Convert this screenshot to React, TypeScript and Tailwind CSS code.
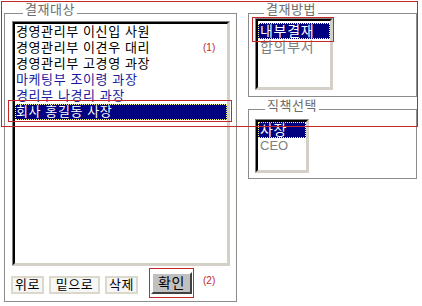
import React from 'react';

type Row = { label: string; tone: 'black' | 'blue' | 'gray'; selected?: boolean };

const targets: Row[] = [
  { label: '경영관리부 이신입 사원', tone: 'black' },
  { label: '경영관리부 이견우 대리', tone: 'black' },
  { label: '경영관리부 고경영 과장', tone: 'black' },
  { label: '마케팅부 조이령 과장', tone: 'blue' },
  { label: '경리부 나경리 과장', tone: 'blue' },
  { label: '회사 홍길동 사장', tone: 'black', selected: true },
];

const toneClass = {
  black: 'text-black',
  blue: 'text-[#1a1a9e]',
  gray: 'text-[#808080]',
};

const ListBox: React.FC<{ className?: string; children: React.ReactNode }> = ({ className, children }) => (
  <div className={`border border-t-[#808080] border-l-[#808080] border-r-[#d4d0c8] border-b-[#d4d0c8] ${className ?? ''}`}>
    <div className="w-full h-full border-2 border-t-black border-l-black border-r-[#d4d0c8] border-b-[#d4d0c8] bg-white overflow-hidden">
      {children}
    </div>
  </div>
);

const Option: React.FC<{ row: Row; className?: string }> = ({ row, className }) => (
  <div
    className={`h-[16px] leading-[16px] whitespace-nowrap pl-[1px] ${
      row.selected
        ? 'bg-[#000080] text-white outline-1 outline-dotted outline-[#ffff80] -outline-offset-1'
        : toneClass[row.tone]
    } ${className ?? ''}`}
  >
    {row.label}
  </div>
);

const Legend: React.FC<{ children: React.ReactNode; className?: string }> = ({ children, className }) => (
  <span className={`block w-fit bg-white px-[2px] text-[13px] tracking-[0.5px] leading-[14px] text-[#6c6c6c] -mt-[11px] ${className ?? ''}`}>
    {children}
  </span>
);

export default function App() {
  return (
    <div className="relative w-[422px] h-[306px] bg-white font-['Liberation_Sans','Noto_Sans_CJK_KR',sans-serif] flex items-start pl-[4px] pt-[13px]">
      {/* 결재대상 */}
      <div className="w-[233px] h-[289px] border border-[#8c8c8c] flex flex-col px-[7px]">
        <Legend className="ml-[11px]">결재대상</Legend>
        <ListBox className="mt-[4px] w-[218px] h-[245px]">
          <div className="text-[13px] tracking-[0.6px]">
            {targets.map((r) => (
              <Option key={r.label} row={r} />
            ))}
          </div>
        </ListBox>
        <div className="flex items-end mt-[6px] -ml-[1px] text-[13px] tracking-[0.5px]">
          <button className="w-[33px] h-[18px] border-2 border-[#dcd8cc] bg-[#f6f6f6] leading-[14px] text-black">위로</button>
          <button className="ml-[5px] w-[51px] h-[18px] border-2 border-[#dcd8cc] bg-[#f6f6f6] leading-[14px] text-black">밑으로</button>
          <button className="ml-[5px] w-[33px] h-[18px] border-2 border-[#dcd8cc] bg-[#f6f6f6] leading-[14px] text-black">삭제</button>
          <button className="ml-[13px] w-[41px] h-[22px] border-2 border-t-white border-l-white border-r-[#404040] border-b-[#404040] bg-[#c0c0c0] text-[14px] leading-[16px] text-black">확인</button>
          <span className="ml-[11px] mb-[8px] text-[10px] leading-[10px] tracking-normal text-[#c02828]">(2)</span>
        </div>
      </div>

      {/* right column */}
      <div className="ml-[11px] w-[169px] flex flex-col">
        <div className="h-[84px] border border-[#8c8c8c] flex flex-col px-[6px]">
          <Legend className="ml-[9px]">결재방법</Legend>
          <ListBox className="mt-[1px] w-[78px] h-[72px]">
            <div className="pt-[2px] text-[14px] tracking-[0.7px]">
              <Option row={{ label: '내부결재', tone: 'black', selected: true }} className="pl-[2px]" />
              <Option row={{ label: '합의부서', tone: 'gray' }} className="pl-[2px]" />
            </div>
          </ListBox>
        </div>

        <div className="mt-[12px] h-[70px] border border-[#8c8c8c] flex flex-col px-[6px]">
          <Legend className="ml-[10px]">직책선택</Legend>
          <ListBox className="mt-[6px] w-[54px] h-[54px]">
            <div className="text-[14px] tracking-[0.5px]">
              <Option row={{ label: '사장', tone: 'black', selected: true }} className="pl-[2px]" />
              <Option row={{ label: 'CEO', tone: 'gray' }} className="pl-[2px] text-[13px] tracking-normal" />
            </div>
          </ListBox>
        </div>
      </div>

      {/* annotations */}
      <span className="absolute left-[203px] top-[43px] text-[10px] leading-[10px] text-[#c02828]">(1)</span>
      <div className="absolute left-[1px] top-[1px] w-[417px] h-[126px] border border-[#c62828] pointer-events-none" />
      <div className="absolute left-[8px] top-[100px] w-[224px] h-[22px] border border-[#c62828] pointer-events-none" />
      <div className="absolute left-[252px] top-[17px] w-[82px] h-[25px] border border-[#c62828] pointer-events-none" />
      <div className="absolute left-[149px] top-[268px] w-[45px] h-[30px] border border-[#c62828] pointer-events-none" />
    </div>
  );
}
